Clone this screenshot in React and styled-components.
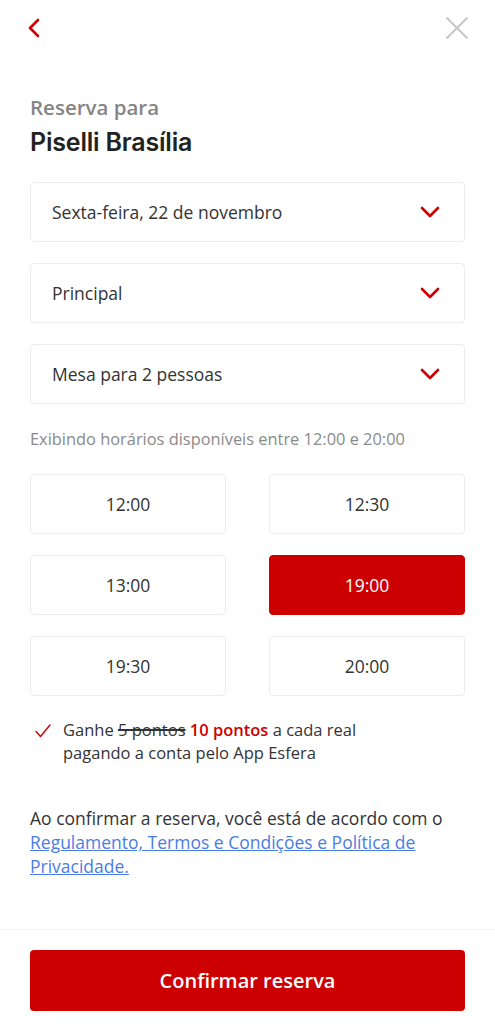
import styled, { createGlobalStyle } from "styled-components";

const GlobalStyle = createGlobalStyle`
  html, body {
    margin: 0;
    padding: 0;
    background: #fff;
  }
  body {
    font-family: "Open Sans", "Liberation Sans", sans-serif;
    color: #333;
  }
`;

const RED = "#cc0000";

const slots = [
  { time: "12:00" },
  { time: "12:30" },
  { time: "13:00" },
  { time: "19:00", selected: true },
  { time: "19:30" },
  { time: "20:00" },
];

const selects = ["Sexta-feira, 22 de novembro", "Principal", "Mesa para 2 pessoas"];

const ChevronDown = () => (
  <svg width="20" height="12" viewBox="0 0 20 12" fill="none">
    <path d="M2 2 L10 10 L18 2" stroke={RED} strokeWidth="2.6" strokeLinecap="round" strokeLinejoin="round" />
  </svg>
);

const App = () => {
  return (
    <Page>
      <GlobalStyle />
      <Header>
        <IconButton aria-label="Voltar">
          <svg width="14" height="20" viewBox="0 0 14 20" fill="none">
            <path d="M11 2 L3 10 L11 18" stroke={RED} strokeWidth="2.6" strokeLinecap="round" strokeLinejoin="round" />
          </svg>
        </IconButton>
        <IconButton aria-label="Fechar">
          <svg width="24" height="24" viewBox="0 0 24 24" fill="none">
            <path d="M2 2 L22 22 M22 2 L2 22" stroke="#c6c6c6" strokeWidth="2" strokeLinecap="round" />
          </svg>
        </IconButton>
      </Header>

      <Content>
        <Subtitle>Reserva para</Subtitle>
        <Title>Piselli Brasília</Title>

        <SelectList>
          {selects.map((s) => (
            <SelectBox key={s}>
              <span>{s}</span>
              <ChevronDown />
            </SelectBox>
          ))}
        </SelectList>

        <Hint>Exibindo horários disponíveis entre 12:00 e 20:00</Hint>

        <SlotGrid>
          {slots.map((s) => (
            <Slot key={s.time} $selected={s.selected}>
              {s.time}
            </Slot>
          ))}
        </SlotGrid>

        <Points>
          <svg width="16" height="14" viewBox="0 0 16 14" fill="none">
            <path d="M1 7.5 L5.5 12.5 L15 1" stroke={RED} strokeWidth="1.4" strokeLinecap="round" strokeLinejoin="round" />
          </svg>
          <p>
            Ganhe <s>5 pontos</s> <strong>10 pontos</strong> a cada real
            <br />
            pagando a conta pelo App Esfera
          </p>
        </Points>

        <Terms>
          Ao confirmar a reserva, você está de acordo com o{" "}
          <a href="#">Regulamento, Termos e Condições e Política de Privacidade.</a>
        </Terms>
      </Content>

      <Footer>
        <PrimaryButton>Confirmar reserva</PrimaryButton>
      </Footer>
    </Page>
  );
};

const Page = styled.div`
  min-height: 1024px;
  display: flex;
  flex-direction: column;
  box-sizing: border-box;
`;

const Header = styled.header`
  height: 56px;
  display: flex;
  align-items: center;
  justify-content: space-between;
  padding: 0 26px 0 27px;
`;

const IconButton = styled.button`
  background: none;
  border: 0;
  padding: 0;
  display: flex;
  align-items: center;
  cursor: pointer;
`;

const Content = styled.main`
  padding: 0 30px;
  display: flex;
  flex-direction: column;
`;

const Subtitle = styled.h2`
  margin: 38px 0 0;
  font-size: 20.5px;
  line-height: 26px;
  font-weight: 600;
  color: #858585;
`;

const Title = styled.h1`
  margin: 6px 0 0;
  font-family: "Inter", "Open Sans", sans-serif;
  font-size: 25px;
  line-height: 32px;
  font-weight: 600;
  letter-spacing: -0.2px;
  color: #222;
`;

const SelectList = styled.div`
  margin-top: 24px;
  display: flex;
  flex-direction: column;
  gap: 21px;
`;

const SelectBox = styled.div`
  height: 60px;
  box-sizing: border-box;
  border: 1px solid #ececec;
  border-radius: 4px;
  display: flex;
  align-items: center;
  justify-content: space-between;
  padding: 0 24px 0 21px;
  font-size: 17.5px;
  color: #333;
`;

const Hint = styled.p`
  margin: 24px 0 0;
  font-size: 16.4px;
  line-height: 22px;
  color: #8a8a8a;
`;

const SlotGrid = styled.div`
  margin-top: 24px;
  display: grid;
  grid-template-columns: 1fr 1fr;
  column-gap: 43px;
  row-gap: 21px;
`;

const Slot = styled.button`
  height: 60px;
  border-radius: 4px;
  border: 1px solid ${(p) => (p.$selected ? RED : "#ececec")};
  background: ${(p) => (p.$selected ? RED : "#fff")};
  color: ${(p) => (p.$selected ? "#fff" : "#333")};
  font-family: inherit;
  font-size: 17.5px;
  cursor: pointer;
`;

const Points = styled.div`
  margin-top: 22px;
  display: flex;
  align-items: flex-start;
  gap: 12px;
  padding-left: 5px;

  svg {
    margin-top: 6px;
    flex-shrink: 0;
  }

  p {
    margin: 0;
    font-size: 16.5px;
    line-height: 23px;
    color: #333;
  }

  s {
    text-decoration-thickness: 1.5px;
  }

  strong {
    color: ${RED};
    font-weight: 600;
  }
`;

const Terms = styled.p`
  margin: 42px 0 0;
  font-size: 17.5px;
  line-height: 24px;
  color: #333;

  a {
    color: #4a7de2;
    text-decoration: underline;
  }
`;

const Footer = styled.footer`
  margin-top: auto;
  border-top: 1px solid #f1f1f1;
  padding: 20px 30px 13px;
`;

const PrimaryButton = styled.button`
  width: 100%;
  height: 61px;
  border: 0;
  border-radius: 4px;
  background: ${RED};
  color: #fff;
  font-family: "Open Sans", sans-serif;
  font-size: 20px;
  font-weight: 600;
  cursor: pointer;
`;

export default App;
